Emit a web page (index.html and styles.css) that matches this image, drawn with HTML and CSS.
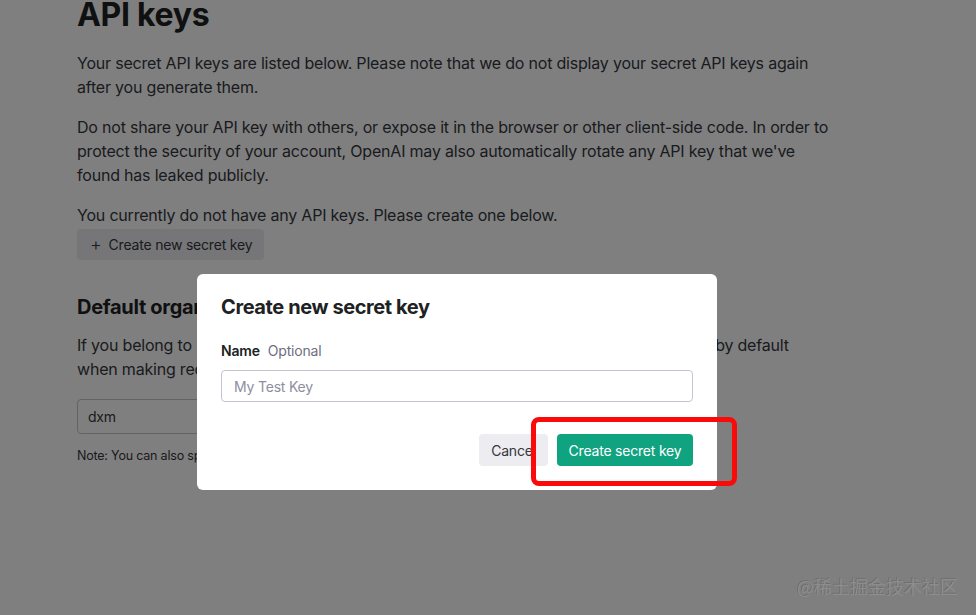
FILE: index.html
```html
<!DOCTYPE html>
<html lang="en">
<head>
<meta charset="utf-8">
<title>API keys</title>
<link rel="stylesheet" href="styles.css">
</head>
<body>
<main class="page">
  <h1 class="title">API keys</h1>
  <p class="para">Your secret API keys are listed below. Please note that we do not display your secret API keys again after you generate them.</p>
  <p class="para">Do not share your API key with others, or expose it in the browser or other client-side code. In order to protect the security of your account, OpenAI may also automatically rotate any API key that we've found has leaked publicly.</p>
  <p class="para tight">You currently do not have any API keys. Please create one below.</p>
  <button class="ghost-btn"><span class="plus">+</span>Create new secret key</button>

  <h2 class="subtitle">Default organization</h2>
  <p class="para">If you belong to multiple organizations, this setting controls which organization is used by default when making requests with the API keys above.</p>
  <div class="select">dxm</div>
  <p class="note">Note: You can also specify which organization to use for each API request. See Authentication to learn more.</p>
</main>

<div class="overlay"></div>

<div class="dialog">
  <h3 class="dialog-title">Create new secret key</h3>
  <div class="label"><strong>Name</strong><span class="optional">Optional</span></div>
  <div class="input">My Test Key</div>
  <div class="actions">
    <button class="btn btn-cancel">Cancel</button>
    <button class="btn btn-primary">Create secret key</button>
  </div>
</div>

<div class="annotation"></div>
<div class="watermark">@稀土掘金技术社区</div>
</body>
</html>
```
FILE: styles.css
```css
html, body {
  margin: 0;
  padding: 0;
  background: #ffffff;
  font-family: Inter, "Noto Sans", sans-serif;
  letter-spacing: -0.2px;
  color: #353740;
  overflow: hidden;
  height: 615px;
}

.page {
  padding-left: 77px;
  width: 756px;
}

.title {
  font-size: 32px;
  line-height: 40px;
  font-weight: 700;
  letter-spacing: -0.3px;
  margin: -5px 0 16px;
  color: #202123;
}

.para {
  font-size: 16px;
  line-height: 24px;
  margin: 0 0 16px;
}

.para.tight {
  margin-bottom: 2px;
}

.ghost-btn {
  font-family: inherit;
  letter-spacing: inherit;
  display: flex;
  align-items: center;
  gap: 7px;
  height: 31px;
  padding: 0 12px 0 13px;
  border: none;
  border-radius: 4px;
  background: #ececf1;
  color: #353740;
  font-size: 14px;
  white-space: nowrap;
}

.plus {
  font-size: 18px;
  line-height: 1;
  font-weight: 300;
}

.subtitle {
  font-size: 20px;
  line-height: 28px;
  font-weight: 700;
  letter-spacing: -0.3px;
  margin: 33px 0 12px;
  color: #202123;
}

.select {
  width: 400px;
  height: 35px;
  box-sizing: border-box;
  border: 1px solid #c5c5d2;
  border-radius: 4px;
  padding: 0 10px;
  display: flex;
  align-items: center;
  font-size: 14px;
  margin-top: 18px;
}

.note {
  font-size: 12.5px;
  line-height: 16px;
  margin: 14px 0 0;
  color: #353740;
}

.overlay {
  position: fixed;
  inset: 0;
  background: rgba(0, 0, 0, 0.5);
}

.dialog {
  position: absolute;
  left: 197px;
  top: 274px;
  width: 520px;
  box-sizing: border-box;
  padding: 19px 24px 24px;
  background: #ffffff;
  border-radius: 6px;
  color: #202123;
}

.dialog-title {
  font-size: 20px;
  line-height: 28px;
  font-weight: 700;
  letter-spacing: -0.4px;
  margin: 0 0 20px;
}

.label {
  font-size: 14px;
  line-height: 20px;
  margin-bottom: 9px;
}

.label strong {
  font-weight: 600;
}

.optional {
  color: #6e6e80;
  margin-left: 8px;
}

.input {
  height: 32px;
  box-sizing: border-box;
  border: 1px solid #c5c5d2;
  border-radius: 4px;
  padding: 0 12px;
  display: flex;
  align-items: center;
  font-size: 14px;
  color: #8e8ea0;
}

.actions {
  display: flex;
  justify-content: flex-end;
  gap: 9px;
  margin-top: 32px;
}

.btn {
  font-family: inherit;
  letter-spacing: inherit;
  font-size: 14px;
  height: 32px;
  border: none;
  border-radius: 4px;
  padding: 0;
  white-space: nowrap;
}

.btn-cancel {
  background: #ececf1;
  color: #353740;
  width: 69px;
}

.btn-primary {
  background: #10a37f;
  color: #ffffff;
  width: 136px;
}

.annotation {
  position: absolute;
  left: 531px;
  top: 417px;
  width: 206px;
  height: 69px;
  box-sizing: border-box;
  border: 5px solid #fb0a0a;
  border-radius: 8px;
}

.watermark {
  position: absolute;
  right: 18px;
  bottom: 18px;
  font-family: "Noto Sans CJK SC", sans-serif;
  font-size: 18px;
  line-height: 22px;
  letter-spacing: 0;
  color: #8d8d8d;
  text-shadow: -1px -1px 0 #707070;
}
```
